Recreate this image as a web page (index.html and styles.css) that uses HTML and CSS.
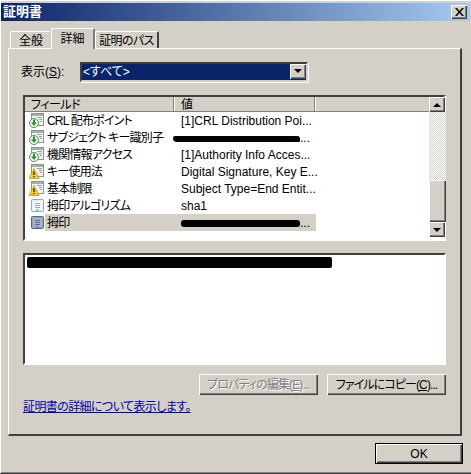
FILE: index.html
```html
<!DOCTYPE html>
<html lang="ja">
<head>
<meta charset="utf-8">
<title>証明書</title>
<link rel="stylesheet" href="styles.css">
</head>
<body>
<svg class="defs" width="0" height="0" aria-hidden="true">
  <defs>
    <symbol id="doc" viewBox="0 0 16 16">
      <rect x="2.5" y="2.5" width="12" height="12" rx="1" fill="#e6eef6" stroke="#9aa6b4"/>
      <rect x="4" y="4" width="9" height="9" fill="#f4f8fc"/>
      <path d="M6 6.500h5M6 8.500h5M6 10.500h5" stroke="#8fa8c8" fill="none"/>
      <path d="M7 13h3" stroke="#3fa8e8" fill="none"/>
    </symbol>
    <symbol id="docsel" viewBox="0 0 16 16">
      <rect x="2.5" y="2.5" width="12" height="12" rx="1" fill="#9aa4bc" stroke="#5a6480"/>
      <rect x="4" y="4" width="9" height="9" fill="#a8b2c8"/>
      <path d="M6 6.500h5M6 8.500h5M6 10.500h5" stroke="#5a6c90" fill="none"/>
      <path d="M7 13h3" stroke="#2c88c8" fill="none"/>
    </symbol>
    <symbol id="arrow" viewBox="0 0 16 16">
      <rect x="2.500" y="1.500" width="12" height="12" fill="#f2f4f2" stroke="#8c948c"/>
      <rect x="3" y="2" width="11" height="2" fill="#a8aea8"/>
      <path d="M8 5.500h5M10 7.500h3M11 9.500h2" stroke="#8fa0b4" fill="none"/>
      <circle cx="5" cy="11" r="4.500" fill="#f4f8f0" stroke="#5a8a5a"/>
      <path d="M4 7.500h2v3h2l-3 3.500-3-3.500h2z" fill="#1f9a2a"/>
    </symbol>
    <symbol id="warn" viewBox="0 0 16 16">
      <rect x="2.500" y="1.500" width="12" height="12" fill="#f2f4f2" stroke="#8c948c"/>
      <rect x="3" y="2" width="11" height="2" fill="#a8aea8"/>
      <path d="M8 5.500h5M10 7.500h3M11 9.500h2" stroke="#8fa0b4" fill="none"/>
      <path d="M5 5.500L10.200 15.500H-.2z" fill="#f8cc20" stroke="#a88a10" stroke-width="0.600"/>
      <path d="M4.400 8.500h1.200v3.500H4.400zM4.400 13h1.200v1.300H4.400z" fill="#111"/>
    </symbol>
  </defs>
</svg>
<div class="window">
  <header class="titlebar">
    <span class="title">証明書</span>
    <button class="close" type="button" aria-label="閉じる">
      <svg width="9" height="8" viewBox="0 0 9 8"><path d="M0 0h2l2.500 3L7 0h2L5.500 4 9 8H7L4.500 5 2 8H0l3.500-4z" fill="#000"/></svg>
    </button>
  </header>
  <div class="content">
    <nav class="tabs">
      <span class="tab tab-first">全般</span>
      <span class="tab tab-active">詳細</span>
      <span class="tab tab-last">証明のパス</span>
    </nav>
    <section class="panel">
      <div class="filter">
        <span class="filter-label">表示(<u>S</u>):</span>
        <div class="select">
          <span class="select-value">&lt;すべて&gt;</span>
          <span class="scroll-btn select-btn"><i class="tri tri-down"></i></span>
        </div>
      </div>
      <div class="list">
        <div class="list-main">
          <div class="list-head">
            <span class="head-cell head-field">フィールド</span>
            <span class="head-cell head-value">値</span>
            <span class="head-cell head-rest"></span>
          </div>
          <div class="row"><svg class="icon"><use href="#arrow"/></svg><span class="cell-name">CRL 配布ポイント</span><span class="cell-value">[1]CRL Distribution Poi...</span></div>
          <div class="row"><svg class="icon"><use href="#arrow"/></svg><span class="cell-name">サブジェクト キー識別子</span><span class="cell-value cell-redact"><i class="blot blot-a"></i>...</span></div>
          <div class="row"><svg class="icon"><use href="#arrow"/></svg><span class="cell-name">機関情報アクセス</span><span class="cell-value">[1]Authority Info Acces...</span></div>
          <div class="row"><svg class="icon"><use href="#warn"/></svg><span class="cell-name">キー使用法</span><span class="cell-value">Digital Signature, Key E...</span></div>
          <div class="row"><svg class="icon"><use href="#warn"/></svg><span class="cell-name">基本制限</span><span class="cell-value">Subject Type=End Entit...</span></div>
          <div class="row"><svg class="icon"><use href="#doc"/></svg><span class="cell-name">拇印アルゴリズム</span><span class="cell-value">sha1</span></div>
          <div class="row row-selected"><svg class="icon"><use href="#docsel"/></svg><span class="cell-name">拇印</span><span class="cell-value cell-redact"><i class="blot blot-b"></i>...</span></div>
        </div>
        <div class="scrollbar">
          <span class="scroll-btn"><i class="tri tri-up"></i></span>
          <span class="track"></span>
          <span class="thumb"></span>
          <span class="scroll-btn"><i class="tri tri-down"></i></span>
        </div>
      </div>
      <div class="detail"><i class="blot blot-c"></i></div>
      <div class="actions">
        <button class="btn" type="button" disabled>プロパティの編集(<u>E</u>)...</button>
        <button class="btn" type="button">ファイルにコピー(<u>C</u>)...</button>
      </div>
      <a class="more" href="#">証明書の詳細について表示します。</a>
    </section>
    <footer class="footer">
      <button class="btn btn-ok" type="button">OK</button>
    </footer>
  </div>
</div>
</body>
</html>
```
FILE: styles.css
```css
* { box-sizing: border-box; }
html, body { margin: 0; padding: 0; }
body {
  width: 471px;
  height: 474px;
  overflow: hidden;
  background: #d4d0c8;
  font: 12px/14px "Liberation Sans", "Noto Sans CJK JP", sans-serif;
  font-feature-settings: "palt";
  color: #000;
}
.defs { position: absolute; }
.window {
  width: 471px;
  height: 474px;
  padding: 3px;
  background: #d4d0c8;
  border-bottom: 1px solid #404040;
  box-shadow: inset 0 1px 0 #fff, inset 1px 0 0 #fff, inset 0 -1px 0 #808080;
  display: flex;
  flex-direction: column;
}
.titlebar {
  height: 18px;
  flex: none;
  margin-left: -2px;
  margin-right: -2px;
  padding: 0 3px 0 2px;
  background: linear-gradient(90deg, #0a246a, #a6caf0);
  display: flex;
  align-items: center;
  justify-content: space-between;
}
.title { color: #fff; font-weight: 700; font-size: 13px; line-height: 18px; }
.close {
  width: 16px;
  height: 14px;
  padding: 0;
  border: 0;
  background: #d4d0c8;
  box-shadow: inset 1px 1px 0 #fff, inset -1px -1px 0 #404040, inset -2px -2px 0 #808080;
  display: flex;
  align-items: center;
  justify-content: center;
}
.content { flex: 1; display: flex; flex-direction: column; padding: 0 5px 0 5px; }
.tabs { height: 27px; flex: none; display: flex; align-items: flex-end; padding-left: 2px; position: relative; z-index: 1; }
.tab {
  height: 17px;
  padding-top: 1px;
  background: #d4d0c8;
  border-top: 1px solid #fff;
  border-left: 1px solid #fff;
  border-right: 2px solid #404040;
  border-radius: 2px 2px 0 0;
  text-align: center;
  line-height: 17px;
}
.tab-first { width: 41px; border-right: 0; }
.tab-active {
  width: 44px;
  height: 21px;
  margin-bottom: -1px;
  border-right: 2px solid #808080;
  line-height: 19px;
}
.tab-last { width: 64px; letter-spacing: -0.6px; }
.panel {
  height: 388px;
  flex: none;
  margin-right: 1px;
  padding: 13px 14px 0 14px;
  border-top: 1px solid #fff;
  border-left: 1px solid #fff;
  border-right: 2px solid #404040;
  border-bottom: 2px solid #404040;
  display: flex;
  flex-direction: column;
}
.filter { display: flex; align-items: center; height: 19px; flex: none; }
.filter-label { width: 59px; margin-left: -2px; line-height: 16px; }
.select {
  width: 228px;
  height: 20px;
  display: flex;
  background: #0a246a;
  border: 2px solid #404040;
  border-right-color: #d4d0c8;
  border-bottom-color: #d4d0c8;
  box-shadow: 1px 1px 0 #fff;
}
.select-value { flex: 1; color: #fff; padding-left: 1px; line-height: 17px; }
.scroll-btn {
  width: 16px;
  height: 15px;
  flex: none;
  background: #d4d0c8;
  box-shadow: inset 1px 1px 0 #fff, inset -1px -1px 0 #404040, inset -2px -2px 0 #808080;
  display: flex;
  align-items: center;
  justify-content: center;
}
.tri { width: 0; height: 0; border-left: 4px solid transparent; border-right: 4px solid transparent; }
.tri-down { border-top: 4px solid #000; }
.tri-up { border-bottom: 4px solid #000; }
.list {
  margin-top: 14px;
  width: 423px;
  height: 146px;
  flex: none;
  display: flex;
  background: #fff;
  border: 2px solid #404040;
  border-right-color: #fff;
  border-bottom-color: #fff;
}
.list-main { width: 404px; flex: none; }
.list-head { height: 15px; display: flex; background: #d4d0c8; border-bottom: 1px solid #808080; }
.head-cell { line-height: 16px; border-right: 1px solid #808080; box-shadow: 1px 0 0 #fff; white-space: nowrap; }
.head-field { width: 149px; padding-left: 6px; letter-spacing: -0.5px; }
.head-value { width: 141px; padding-left: 7px; }
.head-rest { flex: 1; border-right: 0; box-shadow: none; }
.row { height: 17px; display: flex; align-items: stretch; white-space: nowrap; }
.icon { width: 16px; height: 16px; flex: none; margin-left: 4px; }
.cell-name { width: 130px; flex: none; padding: 1px 0 0 2px; line-height: 17px; letter-spacing: -0.8px; }
.cell-value { width: 141px; flex: none; padding: 1px 0 0 6px; line-height: 17px; }
.row-selected .cell-name, .row-selected .cell-value { background: #d4d0c8; }
.cell-redact { display: flex; align-items: center; }
.blot { display: block; background: #000; flex: none; }
.blot-a { width: 127px; height: 6px; margin: 1px 0 0 -8px; border-radius: 3px 4px 2px 6px; }
.blot-b { width: 119px; height: 7px; margin-top: 1px; border-radius: 3px; }
.blot-c { width: 305px; height: 11px; margin: 2px 0 0 1px; border-radius: 2px; }
.scrollbar { width: 17px; flex: none; display: flex; flex-direction: column; }
.track {
  height: 68px;
  background: repeating-conic-gradient(#d4d0c8 0 25%, #fff 0 50%) 0 0 / 2px 2px;
}
.thumb {
  height: 42px;
  background: #d4d0c8;
  box-shadow: inset 1px 1px 0 #fff, inset -1px -1px 0 #404040, inset -2px -2px 0 #808080;
}
.detail {
  margin-top: 12px;
  width: 423px;
  height: 112px;
  flex: none;
  background: #fff;
  border: 2px solid #404040;
  border-right-color: #fff;
  border-bottom-color: #fff;
  padding: 0 1px;
}
.actions { display: flex; justify-content: flex-end; gap: 9px; margin-top: 9px; width: 423px; flex: none; }
.btn {
  width: 119px;
  height: 21px;
  padding: 0;
  border: 0;
  font: inherit;
  font-feature-settings: inherit;
  letter-spacing: -0.9px;
  white-space: nowrap;
  color: #000;
  background: #d4d0c8;
  box-shadow: inset 1px 1px 0 #fff, inset -1px -1px 0 #404040, inset -2px -2px 0 #808080;
}
.btn:disabled { color: #808080; text-shadow: 1px 1px 0 #fff; }
.more { margin-top: 5px; color: #0000a8; text-decoration: underline; flex: none; align-self: flex-start; letter-spacing: -0.6px; }
.footer { display: flex; justify-content: flex-end; padding-top: 7px; padding-right: 0; }
.btn-ok { width: 88px; height: 21px; border: 1px solid #000; letter-spacing: 0; }
```
